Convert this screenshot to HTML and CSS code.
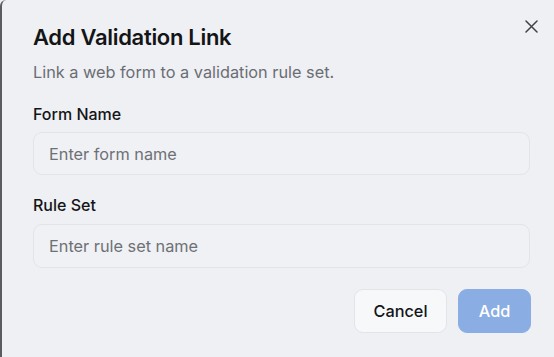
FILE: index.html
```html
<!DOCTYPE html>
<html>
<head>
<meta charset="utf-8">
<link rel="stylesheet" href="styles.css">
</head>
<body>
<div class="dialog">
  <button class="close" aria-label="Close">
    <svg width="13" height="13" viewBox="0 0 13 13"><path d="M1 1L12 12M12 1L1 12" stroke="#3f4247" stroke-width="1.5" stroke-linecap="round" fill="none"/></svg>
  </button>
  <h1 class="title">Add Validation Link</h1>
  <p class="subtitle">Link a web form to a validation rule set.</p>
  <div class="field">
    <label class="label">Form Name</label>
    <div class="input">Enter form name</div>
  </div>
  <div class="field">
    <label class="label">Rule Set</label>
    <div class="input tall">Enter rule set name</div>
  </div>
  <div class="actions">
    <button class="btn cancel">Cancel</button>
    <button class="btn add">Add</button>
  </div>
</div>
</body>
</html>
```
FILE: styles.css
```css
html, body {
  margin: 0;
  padding: 0;
  background: #eff0f4;
}
body {
  width: 554px;
  height: 357px;
  overflow: hidden;
  font-family: Inter, "Noto Sans", sans-serif;
}
.dialog {
  position: relative;
  box-sizing: border-box;
  height: 357px;
  padding: 23px 24px 0 31px;
  background: #eff0f4;
  border-left: 2px solid #5a5c60;
  border-top-left-radius: 6px;
}
.close {
  position: absolute;
  top: 19.5px;
  right: 16.5px;
  width: 13px;
  height: 13px;
  padding: 0;
  border: 0;
  background: none;
  display: flex;
}
.title {
  margin: 0;
  font-size: 22px;
  font-weight: 600;
  line-height: 28px;
  color: #141517;
  letter-spacing: -0.3px;
}
.subtitle {
  margin: 10px 0 0;
  font-size: 16.3px;
  line-height: 22px;
  color: #6a6d73;
}
.field {
  margin-top: 20px;
  display: flex;
  flex-direction: column;
}
.field + .field {
  margin-top: 19px;
}
.label {
  font-size: 16px;
  font-weight: 550;
  line-height: 22px;
  color: #141517;
}
.input {
  margin-top: 7px;
  height: 43px;
  box-sizing: border-box;
  border: 1px solid #e3e4e8;
  border-radius: 9px;
  background: #f0f1f4;
  padding: 0 15px;
  display: flex;
  align-items: center;
  font-size: 16.3px;
  color: #6d7076;
}
.input.tall {
  margin-top: 8px;
  height: 44px;
}
.actions {
  margin-top: 21px;
  margin-right: -1px;
  display: flex;
  justify-content: flex-end;
  gap: 11px;
}
.btn {
  height: 44px;
  box-sizing: border-box;
  border-radius: 9px;
  font-family: inherit;
  font-size: 16.3px;
  font-weight: 550;
  padding: 0;
}
.cancel {
  width: 93px;
  background: #f6f8fa;
  border: 1px solid #e2e4e8;
  color: #141517;
}
.add {
  width: 73px;
  background: #8aaee3;
  border: 1px solid #8aaee3;
  color: #ffffff;
}
```
